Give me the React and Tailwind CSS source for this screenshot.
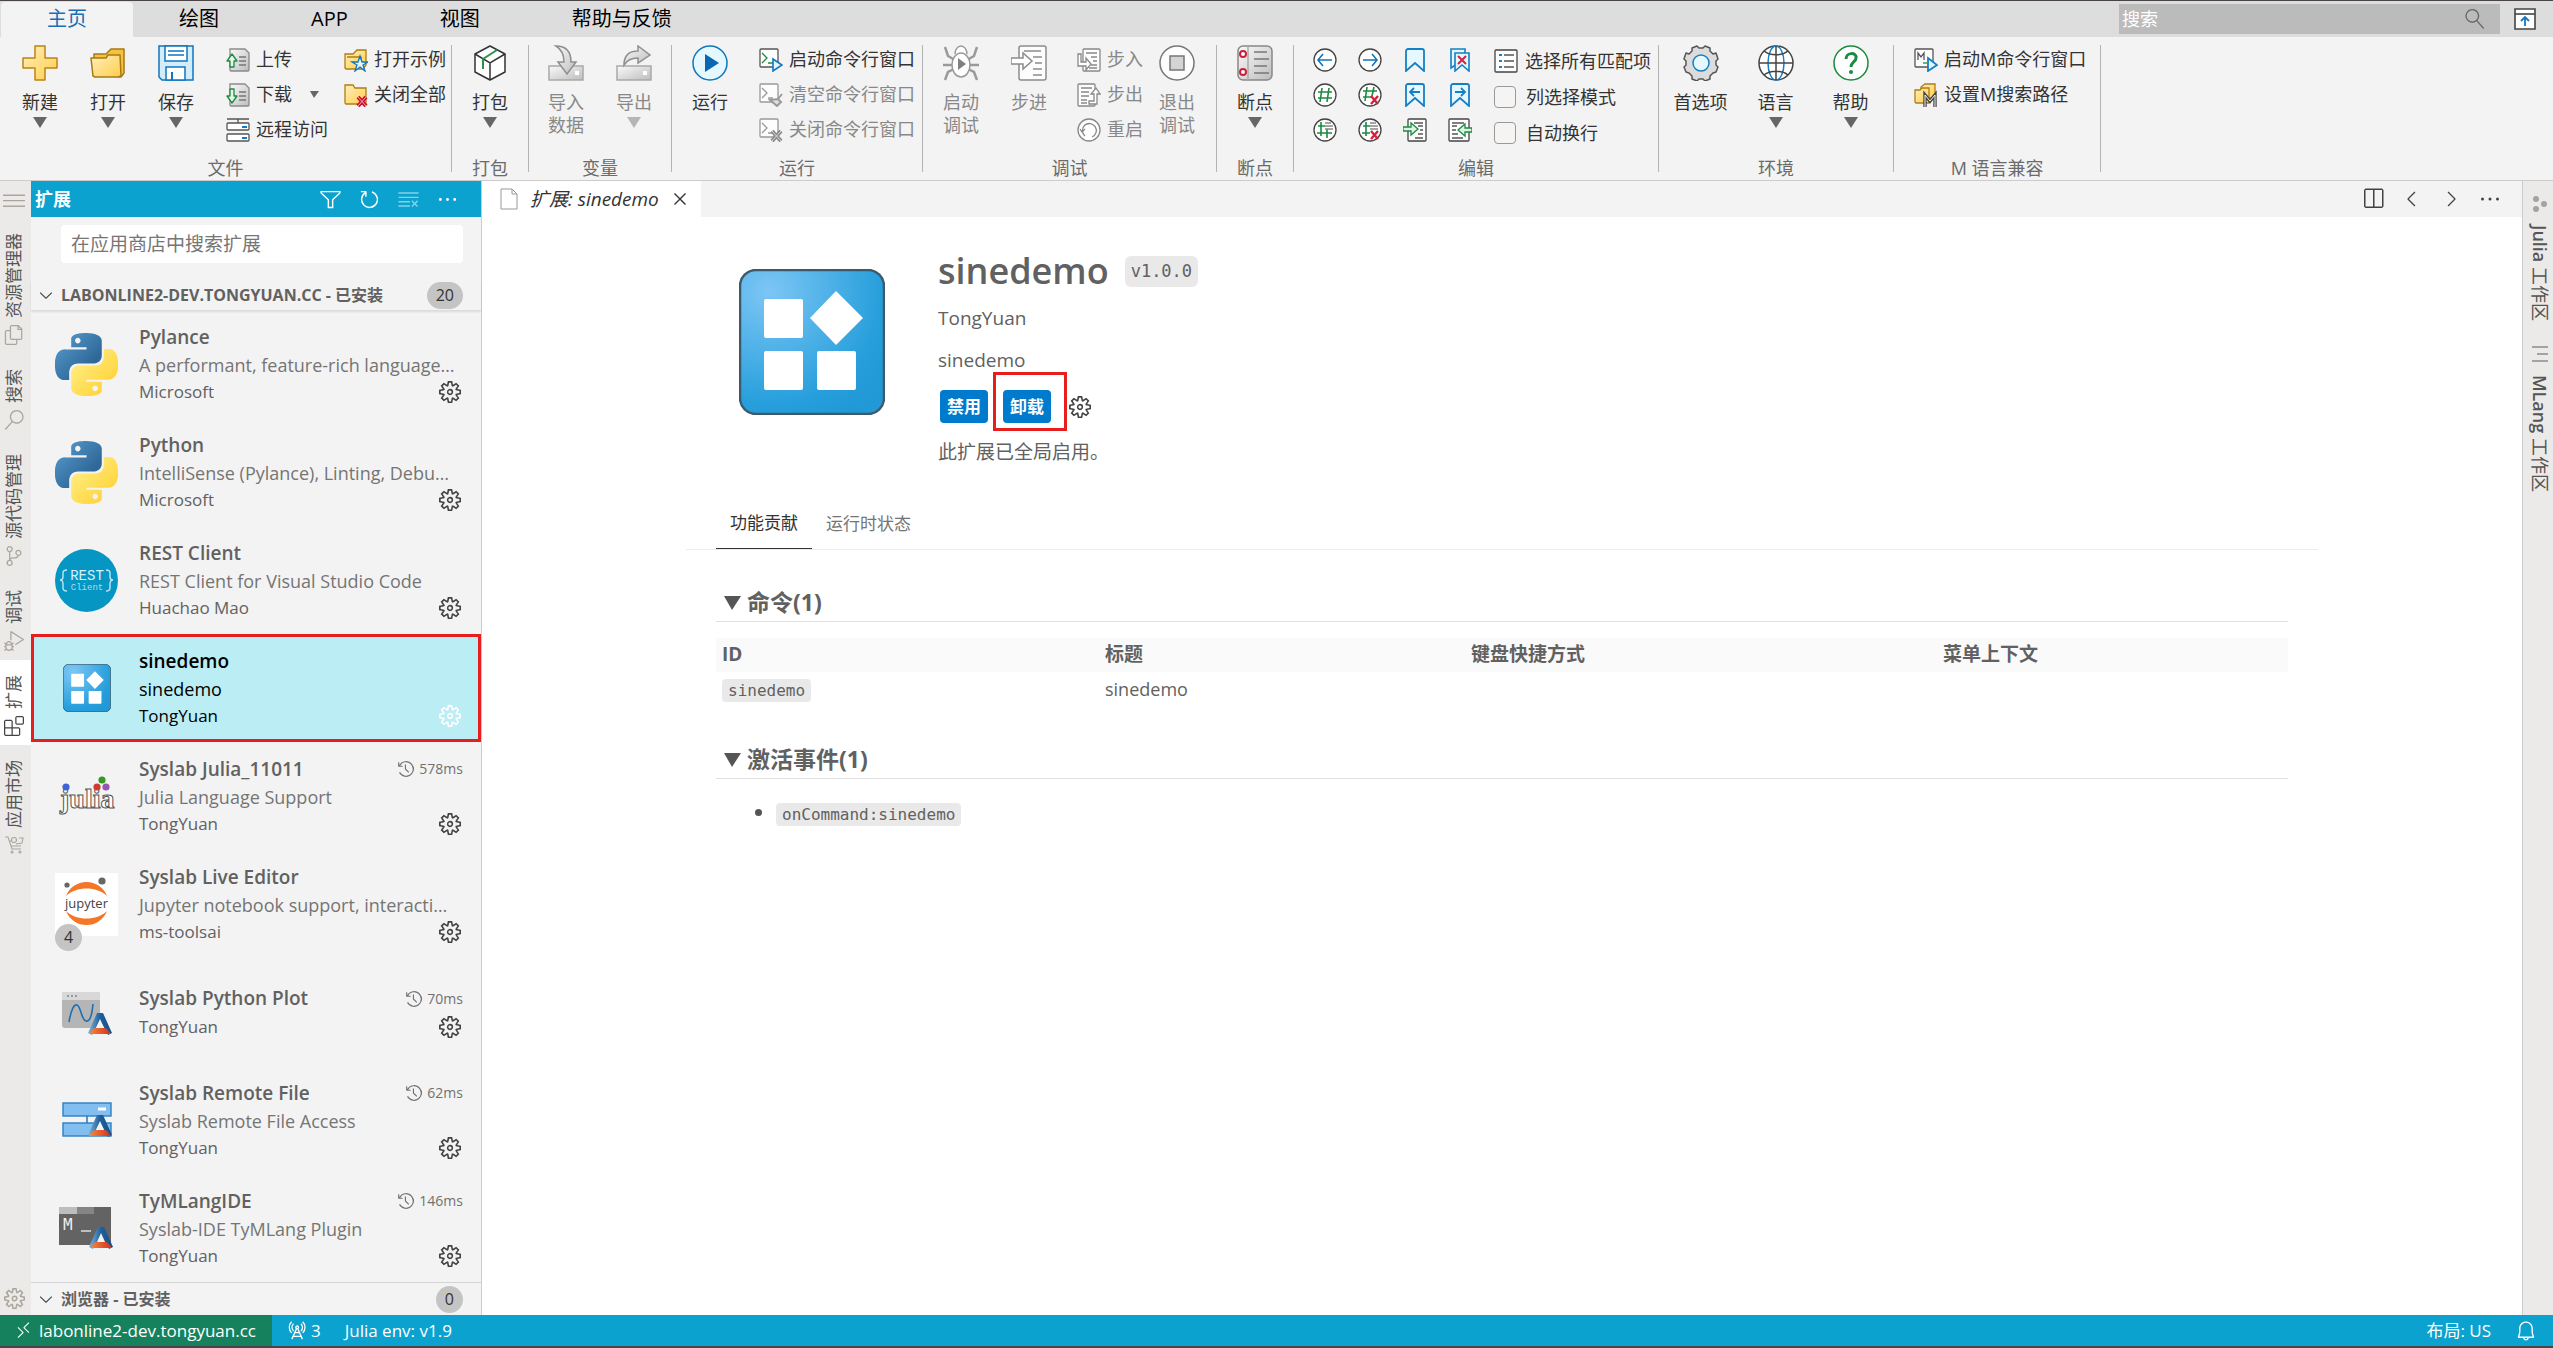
import React, { useState } from 'react';
import {
    VscBell,
    VscChevronDown,
    VscChevronLeft,
    VscChevronRight,
    VscClearAll,
    VscClose,
    VscDebugAlt,
    VscEllipsis,
    VscExtensions,
    VscFiles,
    VscFilter,
    VscHistory,
    VscMenu,
    VscRadioTower,
    VscRefresh,
    VscRemote,
    VscSearch,
    VscSettingsGear,
    VscSourceControl,
    VscSplitHorizontal,
} from 'react-icons/vsc';

/* ---------- ribbon icons ---------- */

function Big({ children }) {
    return (
        <svg width="36" height="36" viewBox="0 0 36 36" fill="none" strokeWidth="1.5" className="shrink-0">
            {children}
        </svg>
    );
}

function Small({ children }) {
    return (
        <svg width="24" height="24" viewBox="0 0 24 24" fill="none" strokeWidth="1.3" className="shrink-0">
            {children}
        </svg>
    );
}

function Gradients() {
    return (
        <svg width="0" height="0" className="absolute" aria-hidden="true">
            <defs>
                <linearGradient id="gold" x1="0" y1="0" x2="1" y2="1">
                    <stop offset="0" stopColor="#ffeebb" />
                    <stop offset="1" stopColor="#ffcf4d" />
                </linearGradient>
                <linearGradient id="silver" x1="0" y1="0" x2="1" y2="1">
                    <stop offset="0" stopColor="#fafafa" />
                    <stop offset="1" stopColor="#bdbdbd" />
                </linearGradient>
                <radialGradient id="sky" cx="0.2" cy="0.15" r="1">
                    <stop offset="0" stopColor="#7cc6f5" />
                    <stop offset="0.8" stopColor="#259edb" />
                    <stop offset="1" stopColor="#2199d6" />
                </radialGradient>
                <linearGradient id="pyBlue" x1="0" y1="0" x2="1" y2="1">
                    <stop offset="0" stopColor="#5a9fd4" />
                    <stop offset="0.7" stopColor="#306998" />
                </linearGradient>
                <linearGradient id="pyYellow" x1="0" y1="0" x2="1" y2="1">
                    <stop offset="0.3" stopColor="#ffe873" />
                    <stop offset="0.8" stopColor="#ffd43b" />
                </linearGradient>
                <linearGradient id="tyBlue" x1="0" y1="0" x2="1" y2="0">
                    <stop offset="0" stopColor="#7db8e0" />
                    <stop offset="0.5" stopColor="#1f5f9c" />
                    <stop offset="1" stopColor="#1a4f86" />
                </linearGradient>
                <linearGradient id="tyRed" x1="0" y1="0" x2="1" y2="0">
                    <stop offset="0" stopColor="#f58a3c" />
                    <stop offset="1" stopColor="#d3301f" />
                </linearGradient>
            </defs>
        </svg>
    );
}

const NewIcon = () => (
    <Big>
        <path d="M13 1h10v12h12v10H23v12H13V23H1V13h12z" fill="url(#gold)" stroke="#b98514" strokeLinejoin="round" />
    </Big>
);

const OpenIcon = () => (
    <Big>
        <path d="M4 29V9h12l5-5h13v24l-3 4z" fill="#f6c23c" stroke="#a67a17" strokeLinejoin="round" />
        <path d="M1 13h15l2-3h12l1 21-3 1H5L3 31z" fill="url(#gold)" stroke="#a67a17" strokeLinejoin="round" />
    </Big>
);

const SaveIcon = () => (
    <Big>
        <path d="M1 1h34v34H4l-3-3z" fill="#d3ecfb" stroke="#1076bd" />
        <path d="M7 1h22v15H7z" fill="#fff" stroke="#1076bd" />
        <path d="M10 6h16M10 10h16" stroke="#1076bd" />
        <path d="M8 35V22h19v13z" fill="#fff" stroke="#1076bd" />
        <path d="M14 35v-8" stroke="#1076bd" strokeWidth="2" />
    </Big>
);

function Page({ up }) {
    return (
        <Small>
            <path d="M4 1h15l4 4v17a1 1 0 0 1-1 1H5a1 1 0 0 1-1-1z" fill="url(#silver)" stroke="#8a8a8a" />
            <path d="M13 9h7M13 13h7M13 17h7" stroke="#777" />
            {up ? (
                <path d="M6 6l5 7H8v6H4v-6H1z" fill="#e8f6ec" stroke="#1c8a3f" strokeLinejoin="round" />
            ) : (
                <path d="M6 20l5-7H8V6H4v7H1z" fill="#e8f6ec" stroke="#1c8a3f" strokeLinejoin="round" />
            )}
        </Small>
    );
}

const RemoteServerIcon = () => (
    <Small>
        <path d="M1 1h22M12 1v4" stroke="#555" />
        <rect x="1" y="5" width="22" height="7" rx="1" fill="#fff" stroke="#555" />
        <rect x="1" y="16" width="22" height="7" rx="1" fill="#fff" stroke="#555" />
        <path d="M16 9h5M16 20h5" stroke="#1478c2" strokeWidth="2" />
    </Small>
);

const ExampleIcon = () => (
    <Small>
        <path d="M1 20V6h8l4-4h9v15l-3 4H2z" fill="url(#gold)" stroke="#b07e14" />
        <path d="M3 9h14l1 10" stroke="#b07e14" />
        <path d="M16 8l2 6h6l-5 3 2 6-5-4-5 4 2-6-5-3h6z" fill="#e3f4ff" stroke="#1076bd" />
    </Small>
);

const CloseAllIcon = () => (
    <Small>
        <path d="M1 20V2h8l2 3h11v16H2z" fill="url(#gold)" stroke="#b07e14" />
        <path d="M14 14l8 9M22 14l-8 9" stroke="#c8102e" strokeWidth="4" />
        <path d="M14 14l8 9M22 14l-8 9" stroke="#f9a8b4" strokeWidth="1" />
    </Small>
);

const PackageIcon = () => (
    <Big>
        <path d="M18 1l15 8v18l-15 8-15-8V9z" fill="#fff" stroke="#333" strokeLinejoin="round" />
        <path d="M3 9l15 9 15-9M18 18v17" stroke="#333" />
        <path d="M25 5L11 14v10" stroke="#2c9148" strokeWidth="2" />
    </Big>
);

const ImportIcon = () => (
    <Big>
        <path d="M1 21h34v14H1z" fill="url(#silver)" stroke="#a9a9a9" />
        <path d="M8 1c11 0 15 6 15 16h5l-9 12-9-12h6C16 9 13 4 8 1z" fill="url(#silver)" stroke="#8f8f8f" />
        <rect x="27" y="26" width="4" height="4" fill="#fff" />
    </Big>
);

const ExportIcon = () => (
    <Big>
        <path d="M1 21h34v14H1z" fill="url(#silver)" stroke="#a9a9a9" />
        <path d="M8 20C8 10 14 6 22 6V1l12 9-12 8v-5C15 13 11 15 8 20z" fill="url(#silver)" stroke="#8f8f8f" />
        <rect x="27" y="26" width="4" height="4" fill="#fff" />
    </Big>
);

const RunIcon = () => (
    <Big>
        <circle cx="18" cy="18" r="17" fill="#e5f8ff" stroke="#1076bd" />
        <path d="M13 9l14 9-14 9z" fill="#0b67b2" />
    </Big>
);

function TerminalIcon({ kind }) {
    const on = kind === 'start';
    return (
        <Small>
            <rect x="1" y="1" width="18" height="18" rx="1" fill="#fdfdfd" stroke={on ? '#555' : '#999'} />
            <path d="M3 5l5 5-5 5M9 15h5" stroke={on ? '#1c8a3f' : '#999'} />
            {kind === 'start' && <path d="M14 11l9 6-9 6z" fill="#e3f4ff" stroke="#1076bd" strokeWidth="1.6" />}
            {kind === 'clear' && <path d="M23 11l-4 5M11 17l8-1 3 3-4 4z" fill="#ddd" stroke="#999" strokeWidth="2" />}
            {kind === 'close' && (
                <>
                    <path d="M13 13l9 10M22 13l-9 10" stroke="#888" strokeWidth="4" />
                    <path d="M13 13l9 10M22 13l-9 10" stroke="#ddd" strokeWidth="1" />
                </>
            )}
        </Small>
    );
}

const BugIcon = () => (
    <Big>
        <path
            d="M2 2l3 9 7 4M34 2l-3 9-7 4M0 20h10M36 20H26M2 35l3-8 6-3M34 35l-3-8-6-3"
            stroke="#9a9a9a"
            strokeWidth="2.5"
        />
        <path d="M12 9a6 8 0 0 1 12 0" fill="#fff" stroke="#9a9a9a" />
        <ellipse cx="18" cy="20" rx="9" ry="12" fill="#fff" stroke="#9a9a9a" />
        <path d="M15 13l8 6-8 6z" fill="#808080" />
    </Big>
);

const StepIcon = () => (
    <Big>
        <rect x="8" y="1" width="27" height="34" rx="2" fill="#fdfdfd" stroke="#8c8c8c" />
        <path d="M13 6h17M22 12h9M24 18h7M22 24h9M22 30h9" stroke="#8c8c8c" />
        <path d="M0 13h12V8l9 8-9 8v-5H0z" fill="#fff" stroke="#8c8c8c" />
    </Big>
);

function StepPage({ out }) {
    return (
        <Small>
            <rect x={out ? 1 : 6} y="1" width="17" height="22" rx="1" fill="#fdfdfd" stroke="#888" />
            <path d={out ? 'M4 5h11M4 9h8M4 13h8M4 17h6M4 20h6' : 'M9 5h11M14 9h6M16 13h4M14 17h6M12 20h8'} stroke="#888" />
            {out ? (
                <path d="M12 18h5v-7h-3l5-6 4 6h-3v10h-8z" fill="#fff" stroke="#888" />
            ) : (
                <path d="M1 6h3v8h5v-4l5 6-5 6v-4H1z" fill="#fff" stroke="#888" />
            )}
        </Small>
    );
}

const RestartIcon = () => (
    <Small>
        <circle cx="12" cy="12" r="11" fill="#fff" stroke="#888" />
        <path d="M8 18a7 7 0 1 1 7 1" stroke="#888" />
        <path d="M3 11l2 3 3-3" stroke="#888" />
    </Small>
);

const StopIcon = () => (
    <Big>
        <circle cx="18" cy="18" r="17" fill="#fdfdfd" stroke="#777" />
        <rect x="11" y="11" width="14" height="14" fill="#d4d4d4" stroke="#777" />
    </Big>
);

const BreakpointIcon = () => (
    <Big>
        <rect x="1" y="1" width="34" height="34" rx="5" fill="url(#silver)" stroke="#888" />
        <path d="M11 1v34" stroke="#aaa" />
        <circle cx="6" cy="9" r="3" fill="#fff" stroke="#c8203c" strokeWidth="2" />
        <circle cx="6" cy="27" r="3" fill="#fff" stroke="#c8203c" strokeWidth="2" />
        <path d="M17 7h13M17 14h15M17 21h13M17 28h15" stroke="#777" />
    </Big>
);

function RoundIcon({ children }) {
    return (
        <Small>
            <circle cx="12" cy="12" r="11" fill="#fff" stroke="#444" />
            {children}
        </Small>
    );
}

const CROSS = 'M13 13l7 8M20 13l-7 8';
const MARK = 'M3 23V3a2 2 0 0 1 2-2h14a2 2 0 0 1 2 2v20l-9-8z';

const editIcons = [
    { label: '后退', icon: <RoundIcon><path d="M19 12H5M10 6l-5 6 5 6" stroke="#1076bd" strokeWidth="1.6" /></RoundIcon> },
    { label: '前进', icon: <RoundIcon><path d="M5 12h14M14 6l5 6-5 6" stroke="#1076bd" strokeWidth="1.6" /></RoundIcon> },
    { label: '书签', icon: <Small><path d={MARK} fill="#e5f8ff" stroke="#1580c4" strokeWidth="1.8" /></Small> },
    {
        label: '清除书签',
        icon: (
            <Small>
                <path d="M3 1h14v17l-5-4-9 6z" fill="#e5f8ff" stroke="#1580c4" strokeWidth="1.6" />
                <path d="M7 5h14v18l-7-6-7 6z" fill="#e5f8ff" stroke="#1580c4" strokeWidth="1.6" />
                <path d="M10 8l8 8M18 8l-8 8" stroke="#d8203c" strokeWidth="2" />
            </Small>
        ),
    },
    { label: '注释', icon: <RoundIcon><path d="M9 5L7 19M16 5l-2 14M5 9h14M5 15h14" stroke="#1c8a3f" strokeWidth="1.6" /></RoundIcon> },
    {
        label: '取消注释',
        icon: (
            <RoundIcon>
                <path d="M9 4L7 18M16 4l-2 9M5 8h14M5 14h9" stroke="#1c8a3f" strokeWidth="1.6" />
                <path d={CROSS} stroke="#d8203c" strokeWidth="2.4" />
            </RoundIcon>
        ),
    },
    { label: '上一书签', icon: <Small><path d={MARK} fill="#e5f8ff" stroke="#1580c4" strokeWidth="1.8" /><path d="M17 9H7M11 5L7 9l4 4" stroke="#1580c4" strokeWidth="1.8" /></Small> },
    { label: '下一书签', icon: <Small><path d={MARK} fill="#e5f8ff" stroke="#1580c4" strokeWidth="1.8" /><path d="M7 9h10M13 5l4 4-4 4" stroke="#1580c4" strokeWidth="1.8" /></Small> },
    {
        label: '块注释',
        icon: (
            <RoundIcon>
                <path d="M8 4v14M5 8h7M4 15h8M14 11v9M12 15h7" stroke="#1c8a3f" strokeWidth="1.6" />
                <path d="M12 5h6M12 8h8M12 11h8" stroke="#888" />
            </RoundIcon>
        ),
    },
    {
        label: '取消块注释',
        icon: (
            <RoundIcon>
                <path d="M8 4v14M5 8h7M4 15h8" stroke="#1c8a3f" strokeWidth="1.6" />
                <path d="M12 5h6M12 8h8M12 11h8" stroke="#888" />
                <path d={CROSS} stroke="#d8203c" strokeWidth="2.4" />
            </RoundIcon>
        ),
    },
    {
        label: '增加缩进',
        icon: (
            <Small>
                <rect x="5" y="1" width="18" height="22" rx="1" fill="#fdfdfd" stroke="#444" />
                <path d="M11 5h9M15 8h5M17 12h3M15 16h5M12 20h8" stroke="#555" />
                <path d="M0 9h8V5l7 6-7 6v-4H0z" fill="#dff3e4" stroke="#1c8a3f" />
            </Small>
        ),
    },
    {
        label: '减少缩进',
        icon: (
            <Small>
                <rect x="1" y="1" width="20" height="22" rx="1" fill="#fdfdfd" stroke="#444" />
                <path d="M4 5h12M4 8h5M4 12h4M4 16h6M4 20h11" stroke="#555" />
                <path d="M24 10h-7V6l-7 6 7 6v-4h7z" fill="#dff3e4" stroke="#1c8a3f" />
            </Small>
        ),
    },
];

const ListIcon = () => (
    <Small>
        <rect x="1" y="1" width="22" height="22" rx="1" fill="#fdfdfd" stroke="#444" />
        <path d="M5 6h3M5 12h3M5 18h3" stroke="#1580c4" strokeWidth="2" />
        <path d="M10 6h10M10 12h10M10 18h10" stroke="#555" />
    </Small>
);

const PreferencesIcon = () => (
    <Big>
        <path
            d="M14 1l2 2h4l2-2 5 2v3l3 3 3-1 2 6-2 2v4l2 2-2 5-3 1-3 3v3l-5 2-2-2h-4l-2 2-5-2v-3l-3-3-3-1-2-5 2-2v-4l-2-2 2-6 3 1 3-3V3z"
            fill="#dcdcdc"
            stroke="#555"
            strokeLinejoin="round"
        />
        <circle cx="18" cy="18" r="8" fill="#e5f8ff" stroke="#1580c4" />
    </Big>
);

const GlobeIcon = () => (
    <Big>
        <circle cx="18" cy="18" r="17" fill="#fff" stroke="#444" />
        <ellipse cx="18" cy="18" rx="8" ry="17" stroke="#1580c4" />
        <path d="M1 18h34M18 1v34M6 6c6 5 18 5 24 0M6 30c6-5 18-5 24 0" stroke="#444" />
    </Big>
);

const HelpIcon = () => (
    <Big>
        <circle cx="18" cy="18" r="17" fill="#fff" stroke="#1c8a3f" />
        <path d="M13 14c0-7 11-7 10-1 0 4-5 4-5 9" stroke="#1c8a3f" strokeWidth="3" />
        <circle cx="18" cy="27" r="2" fill="#1c8a3f" />
    </Big>
);

const MTerminalIcon = () => (
    <Small>
        <rect x="1" y="1" width="18" height="18" rx="1" fill="#fdfdfd" stroke="#555" />
        <path d="M4 12V5l3 4 3-4v7" stroke="#555" />
        <path d="M9 15h4" stroke="#1c8a3f" />
        <path d="M14 10l9 7-9 6z" fill="#e3f4ff" stroke="#1580c4" strokeWidth="1.8" />
    </Small>
);

const MPathIcon = () => (
    <Small>
        <path d="M7 14V4l4-3h10v14H8z" fill="url(#gold)" stroke="#b07e14" />
        <path d="M1 19V7h5l2-2h7v15H2z" fill="url(#gold)" stroke="#b07e14" />
        <path d="M11 24V12l5 6 5-6v12" stroke="#444" strokeWidth="3.4" />
        <path d="M11 24V12l5 6 5-6v12" stroke="#eee" strokeWidth="1" />
    </Small>
);

/* ---------- ribbon parts ---------- */

function Arrow({ tone = 'text-[#666]' }) {
    return (
        <svg width="14" height="11" viewBox="0 0 14 11" className={tone}>
            <path d="M0 0h14L7 11z" fill="currentColor" />
        </svg>
    );
}

function BigButton({ icon, lines, width = 'w-[68px]', arrow = false, disabled = false }) {
    return (
        <button
            disabled={disabled}
            className={`${width} flex flex-col items-center self-start pt-[3px] leading-[23px] ${disabled ? 'text-[#888]' : 'text-[#333]'}`}
        >
            {icon}
            <span className="pt-[10px]">
                {lines.map((line) => (
                    <span key={line} className="block">{line}</span>
                ))}
            </span>
            {arrow && <span className="pt-[3px]"><Arrow tone={disabled ? 'text-[#b5b5b5]' : 'text-[#666]'} /></span>}
        </button>
    );
}

function SmallButton({ icon, label, arrow = false, disabled = false }) {
    return (
        <button disabled={disabled} className={`h-[35px] flex items-center gap-1.5 leading-6 ${disabled ? 'text-[#888]' : 'text-[#333]'}`}>
            {icon}
            <span className="pb-0.5">{label}</span>
            {arrow && (
                <svg width="9" height="7" viewBox="0 0 9 7" className="ml-3">
                    <path d="M0 0h9L4 7z" fill="#666" />
                </svg>
            )}
        </button>
    );
}

function Group({ title, className = '', children }) {
    return (
        <>
            <section className="flex flex-col">
                <div className={`flex flex-1 pt-[5px] ${className}`}>{children}</div>
                <h2 className="text-center leading-6 text-[#6b6b6b]">{title}</h2>
            </section>
            <div className="w-px my-2 bg-[#b4b4b4]"></div>
        </>
    );
}

function Ribbon() {
    return (
        <div className="flex h-36 bg-[#f3f3f3] border-b border-[#ccc] text-lg whitespace-nowrap">
            <Group title="文件" className="pl-1.5 pr-[5px]">
                <BigButton icon={<NewIcon />} lines={['新建']} arrow />
                <BigButton icon={<OpenIcon />} lines={['打开']} arrow />
                <BigButton icon={<SaveIcon />} lines={['保存']} arrow />
                <div className="ml-4">
                    <SmallButton icon={<Page up />} label="上传" />
                    <SmallButton icon={<Page />} label="下载" arrow />
                    <SmallButton icon={<RemoteServerIcon />} label="远程访问" />
                </div>
                <div className="ml-4">
                    <SmallButton icon={<ExampleIcon />} label="打开示例" />
                    <SmallButton icon={<CloseAllIcon />} label="关闭全部" />
                </div>
            </Group>
            <Group title="打包" className="px-1">
                <BigButton icon={<PackageIcon />} lines={['打包']} arrow />
            </Group>
            <Group title="变量" className="px-[3px]">
                <BigButton icon={<ImportIcon />} lines={['导入', '数据']} disabled />
                <BigButton icon={<ExportIcon />} lines={['导出']} arrow disabled />
            </Group>
            <Group title="运行" className="pr-[7px]">
                <BigButton icon={<RunIcon />} lines={['运行']} width="w-[76px]" />
                <div className="ml-[11px]">
                    <SmallButton icon={<TerminalIcon kind="start" />} label="启动命令行窗口" />
                    <SmallButton icon={<TerminalIcon kind="clear" />} label="清空命令行窗口" disabled />
                    <SmallButton icon={<TerminalIcon kind="close" />} label="关闭命令行窗口" disabled />
                </div>
            </Group>
            <Group title="调试" className="pr-[5px]">
                <BigButton icon={<BugIcon />} lines={['启动', '调试']} width="w-[76px]" disabled />
                <BigButton icon={<StepIcon />} lines={['步进']} width="w-[60px]" disabled />
                <div className="ml-[18px]">
                    <SmallButton icon={<StepPage />} label="步入" disabled />
                    <SmallButton icon={<StepPage out />} label="步出" disabled />
                    <SmallButton icon={<RestartIcon />} label="重启" disabled />
                </div>
                <BigButton icon={<StopIcon />} lines={['退出', '调试']} disabled />
            </Group>
            <Group title="断点" className="px-1">
                <BigButton icon={<BreakpointIcon />} lines={['断点']} arrow />
            </Group>
            <Group title="编辑" className="pl-2 pr-[7px]">
                <div className="grid grid-cols-[repeat(4,45px)] auto-rows-[35px] place-items-center">
                    {editIcons.map((item) => (
                        <button key={item.label} aria-label={item.label}>{item.icon}</button>
                    ))}
                </div>
                <div className="ml-3">
                    <button className="h-[37px] flex items-center gap-[7px] text-[#333]">
                        <ListIcon />
                        选择所有匹配项
                    </button>
                    {['列选择模式', '自动换行'].map((label) => (
                        <label key={label} className="h-9 flex items-center gap-2.5 text-[#333]">
                            <input type="checkbox" className="appearance-none size-[22px] rounded border border-[#999] bg-[#f5f4f2]" />
                            {label}
                        </label>
                    ))}
                </div>
            </Group>
            <Group title="环境" className="pl-1 pr-[5px]">
                <BigButton icon={<PreferencesIcon />} lines={['首选项']} width="w-[75px]" />
                <BigButton icon={<GlobeIcon />} lines={['语言']} width="w-[75px]" arrow />
                <BigButton icon={<HelpIcon />} lines={['帮助']} width="w-[75px]" arrow />
            </Group>
            <Group title="M 语言兼容" className="pl-5 pr-3.5">
                <div>
                    <SmallButton icon={<MTerminalIcon />} label="启动M命令行窗口" />
                    <SmallButton icon={<MPathIcon />} label="设置M搜索路径" />
                </div>
            </Group>
        </div>
    );
}

function MenuBar() {
    const [active, setActive] = useState('主页');
    return (
        <header className="h-[37px] flex items-end bg-[#ddd] border-t border-[#4a4446] pl-px">
            <nav className="flex">
                {['主页', '绘图', 'APP', '视图', '帮助与反馈'].map((name) => (
                    <button
                        key={name}
                        onClick={() => setActive(name)}
                        className={`h-[35px] px-[46px] pb-0.5 text-xl leading-7 rounded-t ${active === name ? 'bg-[#f3f3f3] text-[#1a6fb5]' : 'text-black'}`}
                    >
                        {name}
                    </button>
                ))}
            </nav>
            <div className="ml-auto self-center h-[30px] w-[381px] flex items-center bg-[#bbb] px-[3px]">
                <input aria-label="搜索" placeholder="搜索" className="flex-1 min-w-0 text-lg placeholder:text-white outline-none" />
                <VscSearch size={20} className="mr-3 text-[#666] -scale-x-100" />
            </div>
            <button aria-label="折叠功能区" className="ml-3.5 mr-[17px] self-center">
                <svg width="22" height="22" viewBox="0 0 22 22" fill="none">
                    <path d="M1 1h20v20H1z" fill="#fff" stroke="#444" strokeWidth="1.6" />
                    <path d="M1 6h20" stroke="#444" strokeWidth="1.6" />
                    <path d="M11 18V9M7 13l4-4 4 4" stroke="#1478c2" strokeWidth="1.8" />
                </svg>
            </button>
        </header>
    );
}

/* ---------- extension logos ---------- */

const PythonLogo = () => (
    <svg width="63" height="63" viewBox="0 0 24 24">
        <path
            fill="url(#pyBlue)"
            d="M14.25.18l.9.2.73.26.59.3.45.32.34.34.25.34.16.33.1.3.04.26.02.2-.01.13V8.5l-.05.63-.13.55-.21.46-.26.38-.3.31-.33.25-.35.19-.35.14-.33.1-.3.07-.26.04-.21.02H8.77l-.69.05-.59.14-.5.22-.41.27-.33.32-.27.35-.2.36-.15.37-.1.35-.07.32-.04.27-.02.21v3.06H3.17l-.21-.03-.28-.07-.32-.12-.35-.18-.36-.26-.36-.36-.35-.46-.32-.59-.28-.73-.21-.88-.14-1.05-.05-1.23.06-1.22.16-1.04.24-.87.32-.71.36-.57.4-.44.42-.33.42-.24.4-.16.36-.1.32-.05.24-.01h.16l.06.01h8.16v-.83H6.18l-.01-2.75-.02-.37.05-.34.11-.31.17-.28.25-.26.31-.23.38-.2.44-.18.51-.15.58-.12.64-.1.71-.06.77-.04.84-.02 1.27.05zm-6.3 1.98l-.23.33-.08.41.08.41.23.34.33.22.41.09.41-.09.33-.22.23-.34.08-.41-.08-.41-.23-.33-.33-.22-.41-.09-.41.09z"
        />
        <path
            fill="url(#pyYellow)"
            d="M21.04 6.11l.28.06.32.12.35.18.36.27.36.35.35.47.32.59.28.73.21.88.14 1.04.05 1.23-.06 1.23-.16 1.04-.24.86-.32.71-.36.57-.4.45-.42.33-.42.24-.4.16-.36.09-.32.05-.24.02-.16-.01h-8.22v.82h5.84l.01 2.76.02.36-.05.34-.11.31-.17.29-.25.25-.31.24-.38.2-.44.17-.51.15-.58.13-.64.09-.71.07-.77.04-.84.01-1.27-.04-1.07-.14-.9-.2-.73-.25-.59-.3-.45-.33-.34-.34-.25-.34-.16-.33-.1-.3-.04-.25-.02-.2.01-.13v-5.34l.05-.64.13-.54.21-.46.26-.38.3-.32.33-.24.35-.2.35-.14.33-.1.3-.06.26-.04.21-.02.13-.01h5.84l.69-.05.59-.14.5-.21.41-.28.33-.32.27-.35.2-.36.15-.36.1-.35.07-.32.04-.28.02-.21V6.07h2.09l.14.01zm-6.47 14.25l-.23.33-.08.41.08.41.23.33.33.23.41.08.41-.08.33-.23.23-.33.08-.41-.08-.41-.23-.33-.33-.23-.41-.08-.41.08z"
        />
    </svg>
);

const RestLogo = () => (
    <svg width="63" height="63" viewBox="0 0 63 63">
        <circle cx="31.5" cy="31.5" r="31.5" fill="#0696c4" />
        <g fill="none" stroke="#bfe6f2" strokeWidth="1.4">
            <path d="M12 21c-3 0-4 1-4 3v4c0 2-1 3-3 3 2 0 3 1 3 4v4c0 2 1 3 4 3" />
            <path d="M51 21c3 0 4 1 4 3v4c0 2 1 3 3 3-2 0-3 1-3 4v4c0 2-1 3-4 3" />
        </g>
        <text x="32" y="31" textAnchor="middle" fill="#d9f1f8" fontSize="14" fontFamily="Liberation Mono">REST</text>
        <text x="32" y="41" textAnchor="middle" fill="#a9dcec" fontSize="9" fontFamily="Liberation Mono">Client</text>
    </svg>
);

function SinedemoLogo({ size }) {
    return (
        <svg width={size} height={size} viewBox="0 0 146 146">
            <rect x="1" y="1" width="144" height="144" rx="16" fill="url(#sky)" stroke="#3c5a6c" strokeWidth="2.5" />
            <g fill="#fff">
                <rect x="25" y="30" width="39" height="39" rx="2" />
                <rect x="25" y="82" width="39" height="39" rx="2" />
                <rect x="78" y="82" width="39" height="39" rx="2" />
                <path d="M97 22l27 27-27 27-26-27z" strokeLinejoin="round" />
            </g>
        </svg>
    );
}

const JuliaLogo = () => (
    <svg width="63" height="63" viewBox="0 0 63 63">
        <text x="5" y="43" fill="#fff" stroke="#555" strokeWidth="1" fontSize="28" fontWeight="bold" fontFamily="Liberation Serif">
            julia
        </text>
        <circle cx="11" cy="22" r="3.6" fill="#4063d8" />
        <circle cx="42" cy="22" r="3.6" fill="#cb3c33" />
        <circle cx="51" cy="22" r="3.6" fill="#9558b2" />
        <circle cx="47" cy="15" r="3.6" fill="#389826" />
    </svg>
);

const JupyterLogo = () => (
    <svg width="63" height="63" viewBox="0 0 63 63">
        <path d="M0 0h63v63H0z" fill="#fff" />
        <path d="M11 23a22 22 0 0 1 41 0c-10-10-31-10-41 0zM11 38a22 22 0 0 0 41 0c-10 10-31 10-41 0z" fill="#f37726" />
        <circle cx="12" cy="12" r="2.6" fill="#666" />
        <circle cx="47" cy="8" r="3.6" fill="#666" />
        <text x="31.5" y="35" textAnchor="middle" fill="#444" fontSize="13" fontFamily="Open Sans">jupyter</text>
    </svg>
);

function TyMark({ x, y }) {
    return (
        <g transform={`translate(${x} ${y})`}>
            <path d="M9 0h6l9 20-4 2L12 7 4 22l-4-2z" fill="url(#tyBlue)" />
            <path d="M1 21l4-5c4-2 10-2 14 0l4 5z" fill="url(#tyRed)" />
            <path d="M12 6l4 9H8z" fill="#f3f3f3" />
        </g>
    );
}

const PlotLogo = () => (
    <svg width="63" height="63" viewBox="0 0 63 63">
        <rect x="7" y="11" width="38" height="36" rx="3" fill="#b5b5b5" />
        <path d="M7 19v-5a3 3 0 0 1 3-3h32a3 3 0 0 1 3 3v5z" fill="#d8d8d8" />
        <path d="M12 15h2M16 15h2M20 15h2" stroke="#999" strokeWidth="2" />
        <path d="M14 41c2-12 5-18 8-17 4 1 4 15 9 16 4 1 6-6 7-17" fill="none" stroke="#1f6fb0" strokeWidth="1.6" />
        <TyMark x={33} y={32} />
    </svg>
);

const RemoteFileLogo = () => (
    <svg width="63" height="63" viewBox="0 0 63 63">
        <g fill="#82bff0" stroke="#2b7fc4" strokeWidth="1.4">
            <rect x="8" y="14" width="48" height="13" />
            <rect x="8" y="34" width="48" height="13" />
        </g>
        <path d="M32 27v7" stroke="#2b7fc4" strokeWidth="1.6" />
        <path d="M43 20h8" stroke="#fff" strokeWidth="3" />
        <TyMark x={33} y={26} />
    </svg>
);

const MLangLogo = () => (
    <svg width="63" height="63" viewBox="0 0 63 63">
        <rect x="4" y="10" width="52" height="38" fill="#636363" />
        <path d="M4 10h18v7H4z" fill="#bdbdbd" />
        <path d="M22 10h17v7H22z" fill="#858585" />
        <text x="8" y="33" fill="#eee" fontSize="16" fontFamily="DejaVu Sans Mono">M</text>
        <path d="M26 34h10" stroke="#ddd" strokeWidth="1.5" />
        <TyMark x={34} y={30} />
    </svg>
);

const MarketIcon = () => (
    <svg width="20" height="20" viewBox="0 0 20 20" fill="none" stroke="currentColor" strokeWidth="1.1">
        <path d="M1 2h3l4 12h9M5 6h2M12 9l6-1 1-5h-4M7 11h10" />
        <circle cx="10" cy="5" r="2.5" />
        <circle cx="8" cy="17" r="1" />
        <circle cx="16" cy="17" r="1" />
    </svg>
);

/* ---------- side bars ---------- */

const activities = [
    { label: '资源管理器', icon: VscFiles },
    { label: '搜索', icon: VscSearch },
    { label: '源代码管理', icon: VscSourceControl },
    { label: '调试', icon: VscDebugAlt },
    { label: '扩展', icon: VscExtensions, active: true },
    { label: '应用市场', icon: MarketIcon },
];

function ActivityBar() {
    return (
        <nav className="w-[31px] shrink-0 flex flex-col bg-[#ebeae8] text-[#aaa69c]">
            <button aria-label="菜单" className="h-[37px] pl-[3px]"><VscMenu size={22} /></button>
            {activities.map(({ label, icon: Icon, active }) => (
                <button
                    key={label}
                    className={`flex flex-col items-center gap-[7px] pt-[15px] pb-[9px] pr-[3px] ${active ? 'bg-white text-[#444]' : ''}`}
                >
                    <span className="[writing-mode:vertical-rl] [text-orientation:sideways] rotate-180 text-[17px] leading-5 text-[#555]">{label}</span>
                    <Icon size={20} />
                </button>
            ))}
            <button aria-label="设置" className="mt-auto mb-1.5 pl-1"><VscSettingsGear size={21} /></button>
        </nav>
    );
}

const extensions = [
    { name: 'Pylance', desc: 'A performant, feature-rich language…', publisher: 'Microsoft', logo: <PythonLogo /> },
    { name: 'Python', desc: 'IntelliSense (Pylance), Linting, Debu…', publisher: 'Microsoft', logo: <PythonLogo /> },
    { name: 'REST Client', desc: 'REST Client for Visual Studio Code', publisher: 'Huachao Mao', logo: <RestLogo /> },
    { name: 'sinedemo', desc: 'sinedemo', publisher: 'TongYuan', logo: <SinedemoLogo size={48} />, selected: true },
    { name: 'Syslab Julia_11011', desc: 'Julia Language Support', publisher: 'TongYuan', logo: <JuliaLogo />, time: '578ms' },
    { name: 'Syslab Live Editor', desc: 'Jupyter notebook support, interacti…', publisher: 'ms-toolsai', logo: <JupyterLogo />, badge: 4 },
    { name: 'Syslab Python Plot', publisher: 'TongYuan', logo: <PlotLogo />, time: '70ms' },
    { name: 'Syslab Remote File', desc: 'Syslab Remote File Access', publisher: 'TongYuan', logo: <RemoteFileLogo />, time: '62ms' },
    { name: 'TyMLangIDE', desc: 'Syslab-IDE TyMLang Plugin', publisher: 'TongYuan', logo: <MLangLogo />, time: '146ms' },
];

function ExtensionRow({ ext }) {
    const tone = ext.selected
        ? 'bg-[#bbedf5] text-black outline-3 -outline-offset-3 outline-[#e81e1e]'
        : 'text-[#616161]';
    return (
        <li className={`h-[108px] flex items-center pl-6 pr-[18px] ${tone}`}>
            <div className="relative size-[63px] shrink-0 flex items-center justify-center">
                {ext.logo}
                {ext.badge && (
                    <span className="absolute left-0 -bottom-[15px] size-[27px] rounded-full bg-[#c4c4c4] text-base leading-[27px] text-center text-[#333]">
                        {ext.badge}
                    </span>
                )}
            </div>
            <div className="ml-[21px] flex-1 min-w-0 whitespace-nowrap">
                <div className="flex items-center justify-between h-[29px]">
                    <h3 className="text-[19px] font-semibold">{ext.name}</h3>
                    {ext.time && (
                        <span className="flex items-center gap-1 text-sm text-[#717171]">
                            <VscHistory size={18} />
                            {ext.time}
                        </span>
                    )}
                </div>
                {ext.desc && (
                    <p className={`h-[27px] text-lg leading-[27px] ${ext.selected ? '' : 'text-[#757575]'}`}>{ext.desc}</p>
                )}
                <div className="flex items-center justify-between h-[27px]">
                    <span className="text-[17px] font-medium">{ext.publisher}</span>
                    <button aria-label={`管理 ${ext.name}`} className={`mr-0.5 ${ext.selected ? 'text-white' : 'text-[#424242]'}`}>
                        <VscSettingsGear size={22} />
                    </button>
                </div>
            </div>
        </li>
    );
}

function SectionHeader({ title, count }) {
    return (
        <button className="w-full flex items-center pl-[5px] pr-[18px] text-base font-bold text-[#616161]">
            <VscChevronDown size={20} className="mr-[5px] text-[#444]" />
            <span className="flex-1 text-left whitespace-nowrap">{title}</span>
            <span className="h-[27px] min-w-[27px] px-[9px] rounded-full bg-[#c4c4c4] font-normal leading-[27px] text-[#333]">{count}</span>
        </button>
    );
}

function ExtensionsPanel() {
    return (
        <aside className="w-[451px] shrink-0 flex flex-col bg-[#f3f3f3] border-r border-[#ccc]">
            <div className="h-9 flex items-center pl-1 pr-[22px] bg-[#0ba2cf] text-white">
                <h2 className="flex-1 text-lg font-bold">扩展</h2>
                <div className="flex gap-4">
                    <button aria-label="筛选"><VscFilter size={23} /></button>
                    <button aria-label="刷新"><VscRefresh size={23} /></button>
                    <button aria-label="清除" className="opacity-50"><VscClearAll size={23} /></button>
                    <button aria-label="更多"><VscEllipsis size={23} /></button>
                </div>
            </div>
            <div className="pt-2 pb-[17px] pl-[30px] pr-[18px]">
                <input
                    aria-label="在应用商店中搜索扩展"
                    placeholder="在应用商店中搜索扩展"
                    className="w-full h-[38px] px-2.5 bg-white rounded-sm text-[19px] placeholder:text-[#767676] outline-none"
                />
            </div>
            <div className="h-[30px] flex shadow-[0_2px_2px_#0000001a]">
                <SectionHeader title="LABONLINE2-DEV.TONGYUAN.CC - 已安装" count={20} />
            </div>
            <ul className="flex-1">
                {extensions.map((ext) => <ExtensionRow key={ext.name} ext={ext} />)}
            </ul>
            <div className="h-[33px] flex border-t border-[#d4d4d4]">
                <SectionHeader title="浏览器 - 已安装" count={0} />
            </div>
        </aside>
    );
}

function WorkspaceBar() {
    return (
        <nav className="w-[31px] shrink-0 flex flex-col items-center pl-1 bg-[#ebeae8] border-l border-[#ccc] text-lg leading-5 text-[#555]">
            <button className="flex flex-col items-center gap-3 pt-3.5">
                <svg width="16" height="18" viewBox="0 0 16 18" fill="#a3a3a3">
                    <circle cx="4" cy="4" r="3" />
                    <circle cx="12" cy="9" r="3" />
                    <circle cx="4" cy="14" r="3" />
                </svg>
                <span className="[writing-mode:vertical-rl] [text-orientation:sideways]"><b className="font-semibold">Julia</b> 工作区</span>
            </button>
            <button className="flex flex-col items-center gap-3 pt-6">
                <svg width="16" height="18" viewBox="0 0 16 18" stroke="#a3a3a3" strokeWidth="2">
                    <path d="M0 2h16M5 9h11M0 16h16" />
                </svg>
                <span className="[writing-mode:vertical-rl] [text-orientation:sideways]"><b className="font-semibold">MLang</b> 工作区</span>
            </button>
        </nav>
    );
}

/* ---------- editor ---------- */

function Code({ children }) {
    return (
        <code className="inline-block px-1.5 rounded bg-[#e9e9e9] font-['DejaVu_Sans_Mono','Noto_Sans_CJK_SC',monospace] text-base leading-[23px] text-[#616161]">
            {children}
        </code>
    );
}

function Section({ title, children }) {
    return (
        <details open className="group">
            <summary className="list-none flex items-center gap-1.5 h-[38px] pl-2 border-b border-[#e0e0e0] text-[23px] font-bold">
                <svg width="17" height="14" viewBox="0 0 17 14" className="-rotate-90 group-open:rotate-0">
                    <path d="M0 0h17L8 14z" fill="#555" />
                </svg>
                {title}
            </summary>
            {children}
        </details>
    );
}

const blueButton = 'h-[33px] w-12 rounded-sm bg-[#007acc] text-[17px] font-bold text-white';

function Editor() {
    return (
        <main className="flex-1 min-w-0 bg-white text-[#616161]">
            <div className="h-9 flex items-center bg-[#f3f3f3] text-[#424242]">
                <div className="h-full flex items-center bg-white pl-[18px] pr-2.5 text-[#333]">
                    <svg width="18" height="22" viewBox="0 0 18 22" fill="#fff" stroke="#999">
                        <path d="M1 1h11l5 5v15H1zM12 1v5h5" />
                    </svg>
                    <span className="pl-3 pr-2.5 text-[19px] italic">扩展: sinedemo</span>
                    <button aria-label="关闭"><VscClose size={22} /></button>
                </div>
                <div className="ml-auto mr-5 flex gap-[15px]">
                    <button aria-label="拆分编辑器"><VscSplitHorizontal size={24} /></button>
                    <button aria-label="上一个"><VscChevronLeft size={24} /></button>
                    <button aria-label="下一个"><VscChevronRight size={24} /></button>
                    <button aria-label="更多操作"><VscEllipsis size={24} /></button>
                </div>
            </div>

            <div className="w-4/5 mx-auto">
                <div className="flex items-start pt-[29px] px-[30px]">
                    <div className="size-48 shrink-0 flex items-center justify-center">
                        <SinedemoLogo size={146} />
                    </div>
                    <div className="pl-[30px] text-[19px]">
                        <div className="flex items-center gap-4 h-[50px]">
                            <h1 className="text-4xl font-semibold">sinedemo</h1>
                            <span className="h-[31px] px-1.5 rounded-md bg-[#e9e9e9] font-['DejaVu_Sans_Mono','Noto_Sans_CJK_SC',monospace] text-[17px] leading-[31px]">v1.0.0</span>
                        </div>
                        <p className="pt-[7px] leading-[30px]">TongYuan</p>
                        <p className="pt-3 leading-[30px]">sinedemo</p>
                        <div className="flex items-center pl-0.5 pt-[15px]">
                            <button className={blueButton}>禁用</button>
                            <span className="relative ml-[15px]">
                                <button className={blueButton}>卸载</button>
                                <span className="absolute -left-2.5 -right-4 -top-[18px] -bottom-2 border-3 border-[#e81e1e]"></span>
                            </span>
                            <button aria-label="管理" className="ml-[18px] text-[#424242]"><VscSettingsGear size={22} /></button>
                        </div>
                        <p className="pt-3.5 leading-[30px]">此扩展已全局启用。</p>
                    </div>
                </div>

                <div className="mt-[31px] flex pl-[30px] border-b border-[#ececec] text-[17px]">
                    <button className="h-[51px] px-3.5 border-b border-[#333] text-[#333]">功能贡献</button>
                    <button className="h-[51px] px-3.5 text-[#757575]">运行时状态</button>
                </div>

                <div className="pt-[34px] px-[30px]">
                    <Section title="命令(1)">
                        <table className="w-full mt-4 table-fixed text-left text-lg">
                            <thead>
                                <tr className="h-[34px] bg-[#fafafa] text-[19px]">
                                    <th className="w-[383px] px-1.5">ID</th>
                                    <th className="w-[366px] px-1.5">标题</th>
                                    <th className="w-[472px] px-1.5">键盘快捷方式</th>
                                    <th className="px-1.5">菜单上下文</th>
                                </tr>
                            </thead>
                            <tbody>
                                <tr className="h-[34px]">
                                    <td className="px-1.5"><Code>sinedemo</Code></td>
                                    <td className="px-1.5">sinedemo</td>
                                    <td></td>
                                    <td></td>
                                </tr>
                            </tbody>
                        </table>
                    </Section>
                    <div className="pt-[35px]">
                        <Section title="激活事件(1)">
                            <ul className="list-disc pl-[60px] pt-5 text-xl marker:text-[#555]">
                                <li><Code>onCommand:sinedemo</Code></li>
                            </ul>
                        </Section>
                    </div>
                </div>
            </div>
        </main>
    );
}

function StatusBar() {
    return (
        <footer className="h-[33px] flex items-stretch bg-[#0ba2cf] border-b-2 border-[#4a4446] text-[17px] text-white">
            <button className="flex items-center gap-1.5 pl-[14px] pr-4 bg-[#16825d]">
                <VscRemote size={19} />
                labonline2-dev.tongyuan.cc
            </button>
            <button className="flex items-center gap-1 px-3.5"><VscRadioTower size={21} />3</button>
            <button className="px-2.5">Julia env: v1.9</button>
            <button className="ml-auto px-3.5">布局: US</button>
            <button aria-label="通知" className="pl-2.5 pr-4"><VscBell size={22} /></button>
        </footer>
    );
}

export default function App() {
    return (
        <div className="min-h-screen flex flex-col bg-[#f3f3f3] font-['Open_Sans','Noto_Sans_CJK_SC',sans-serif]">
            <Gradients />
            <MenuBar />
            <Ribbon />
            <div className="flex-1 flex">
                <ActivityBar />
                <ExtensionsPanel />
                <Editor />
                <WorkspaceBar />
            </div>
            <StatusBar />
        </div>
    );
}
